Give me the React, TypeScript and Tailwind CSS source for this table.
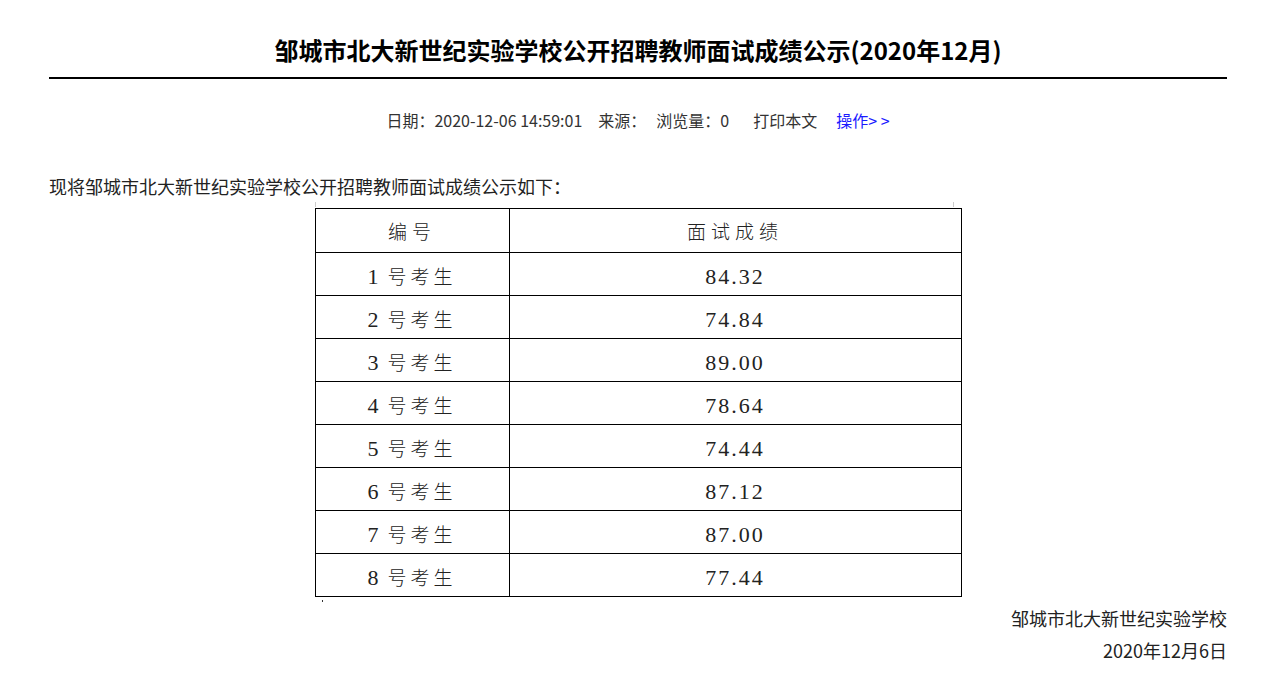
const rows = [
  { no: "1", score: "84.32" },
  { no: "2", score: "74.84" },
  { no: "3", score: "89.00" },
  { no: "4", score: "78.64" },
  { no: "5", score: "74.44" },
  { no: "6", score: "87.12" },
  { no: "7", score: "87.00" },
  { no: "8", score: "77.44" },
];

const sans = "font-['Microsoft_YaHei','Noto_Sans_CJK_SC',sans-serif]";

const App = () => {
  return (
    <div className={`min-h-screen bg-white px-[49px] text-[#222] ${sans}`}>
      {/* title */}
      <h1 className="pt-[35px] text-center text-[24px] font-bold leading-[30px] text-black">
        邹城市北大新世纪实验学校公开招聘教师面试成绩公示(2020年12月)
      </h1>
      <div className="mt-[12px] h-[2px] bg-black"></div>

      {/* meta */}
      <div className="mt-[29px] flex justify-center text-[16px] leading-[24px] text-[#333]">
        <span>日期：2020-12-06 14:59:01</span>
        <span className="ml-[16px]">来源：</span>
        <span className="ml-[10px]">浏览量：0</span>
        <span className="ml-[24px]">打印本文</span>
        <span className="ml-[19px] text-[#1a1aff]">操作&gt; &gt;</span>
      </div>

      {/* body */}
      <p className="mt-[41px] text-[18px] leading-[26px] text-[#222]">
        现将邹城市北大新世纪实验学校公开招聘教师面试成绩公示如下：
      </p>

      <div className="relative mx-auto mt-[9px] w-[647px]">
        <div className="absolute left-0 top-[-6px] h-[5px] w-px bg-[#ccc]"></div>
        <div className="absolute right-[8px] top-[-6px] h-[5px] w-px bg-[#ccc]"></div>
        <table className="w-full border-collapse font-['Liberation_Serif','Noto_Sans_CJK_SC',serif] font-light text-[#222]">
          <thead>
            <tr className="h-[44px]">
              <th className="w-[194px] border border-black pt-[5px] text-[19px] font-light tracking-[5px]">编号</th>
              <th className="border border-black pt-[5px] text-[19px] font-light tracking-[5px]">面试成绩</th>
            </tr>
          </thead>
          <tbody>
            {rows.map((r) => (
              <tr key={r.no} className="h-[43px]">
                <td className="border border-black pt-[4px] text-center text-[19px] tracking-[4px]">
                  <span className="mr-[5px] text-[22px]">{r.no}</span>
                  号考生
                </td>
                <td className="border border-black pt-[4px] text-center text-[22px] tracking-[2px]">{r.score}</td>
              </tr>
            ))}
          </tbody>
        </table>
        <div className="absolute bottom-[-5px] left-[7px] h-[2px] w-[1px] bg-[#333]"></div>
      </div>

      {/* footer */}
      <div className="mt-[5px] text-right text-[18px] leading-[32px] text-[#222]">
        <p>邹城市北大新世纪实验学校</p>
        <p>2020年12月6日</p>
      </div>
    </div>
  );
};

export default App;
